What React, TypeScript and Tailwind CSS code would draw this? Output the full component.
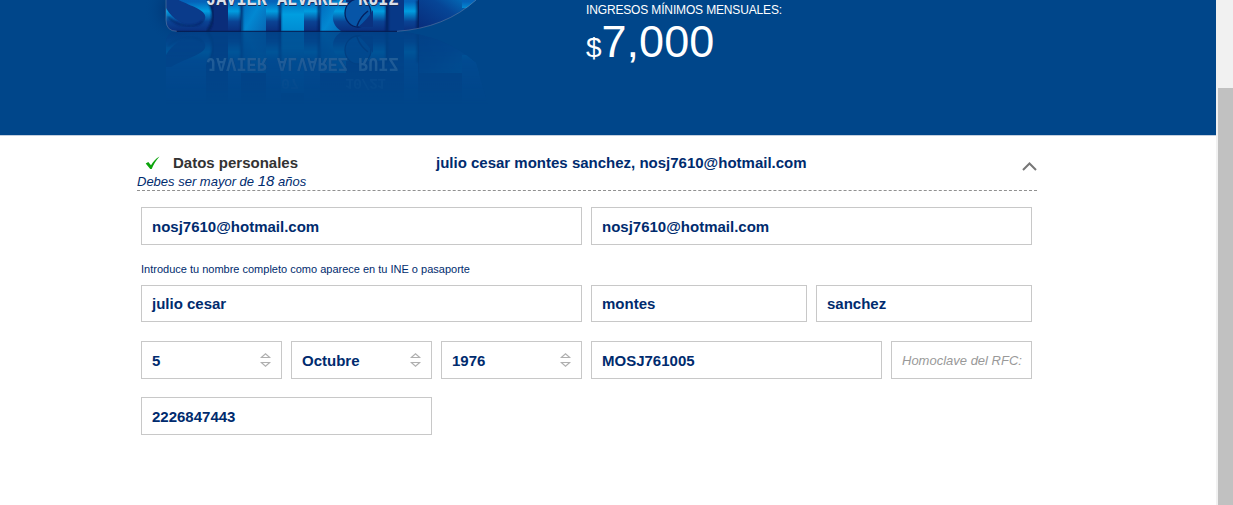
import React from "react";

function Field({ className = "", children }: { className?: string; children: React.ReactNode }) {
  return (
    <div
      className={`flex items-center justify-between whitespace-nowrap border border-[#c8c8c8] bg-white pl-[10px] text-[15px] font-bold leading-none text-[#002b6e] ${className}`}
    >
      {children}
    </div>
  );
}

function SelectField({ children }: { children: React.ReactNode }) {
  return (
    <Field className="h-[38px] w-[141px] pr-[10px]">
      <span>{children}</span>
      <svg width="11" height="14" viewBox="0 0 11 14" fill="none" stroke="#b0b0b0" strokeWidth="1.2">
        <path d="M1.3 4.5 L5.5 0.9 L9.7 4.5 M0.5 4.5 H10.5 M1.3 9.5 L5.5 13.1 L9.7 9.5 M0.5 9.5 H10.5" />
      </svg>
    </Field>
  );
}

function CardArt() {
  return (
    <svg className="block h-[135px] w-[560px]" viewBox="0 0 560 135">
      <defs>
        <linearGradient id="band" gradientUnits="userSpaceOnUse" x1="0" y1="-20" x2="0" y2="32">
          <stop offset="0" stopColor="#0757ad" />
          <stop offset="0.42" stopColor="#0563b9" />
          <stop offset="0.6" stopColor="#009ee0" />
          <stop offset="0.8" stopColor="#0a4394" />
          <stop offset="1" stopColor="#0a2d7c" />
        </linearGradient>
        <linearGradient id="bright" x1="0" y1="0" x2="1" y2="1">
          <stop offset="0" stopColor="#005fb4" />
          <stop offset="0.55" stopColor="#0288d2" />
          <stop offset="1" stopColor="#0867b4" />
        </linearGradient>
        <linearGradient id="cyan" gradientUnits="userSpaceOnUse" x1="0" y1="0" x2="0" y2="32">
          <stop offset="0" stopColor="#006fc0" />
          <stop offset="0.45" stopColor="#009ee0" />
          <stop offset="1" stopColor="#008bd2" />
        </linearGradient>
        <linearGradient id="tail" x1="0" y1="1" x2="1" y2="0">
          <stop offset="0" stopColor="#082a79" />
          <stop offset="0.5" stopColor="#064596" />
          <stop offset="1" stopColor="#008dd4" />
        </linearGradient>
        <radialGradient id="halo">
          <stop offset="0" stopColor="#001f58" stopOpacity="0.65" />
          <stop offset="1" stopColor="#00458a" stopOpacity="0" />
        </radialGradient>
        <linearGradient id="fade" gradientUnits="userSpaceOnUse" x1="0" y1="32" x2="0" y2="105">
          <stop offset="0" stopColor="#fff" stopOpacity="0.22" />
          <stop offset="0.5" stopColor="#fff" stopOpacity="0.13" />
          <stop offset="1" stopColor="#fff" stopOpacity="0" />
        </linearGradient>
        <mask id="fadeMask" maskUnits="userSpaceOnUse" x="0" y="32" width="560" height="103">
          <rect x="0" y="32" width="560" height="103" fill="url(#fade)" />
        </mask>
        <filter id="soft" x="-10%" y="-10%" width="120%" height="120%">
          <feGaussianBlur stdDeviation="0.8" />
        </filter>
        <clipPath id="cardShape">
          <path d="M166 -50 V20 Q166 31.5 178 31.5 H397 Q445 28 476 0 L490 -50 Z" />
        </clipPath>
        <g id="card">
          <g clipPath="url(#cardShape)">
            <rect x="160" y="-50" width="330" height="82" fill="#0a2d7a" />
            <path d="M160 -50 H206 V-2 C214 8 215 24 206 33 H160 Z" fill="url(#band)" />
            <path d="M166 8 C177 28 202 29 205 19 C208 9 188 6 171 -4 L166 -4 Z" fill="#0a3b8b" />
            <path d="M168 17 C179 28 196 28 203 21" fill="none" stroke="#07245f" strokeWidth="1.2" filter="url(#soft)" />
            <path d="M207 -2 C215 10 214 23 207 32" fill="none" stroke="#041d55" strokeWidth="2" filter="url(#soft)" />
            <rect x="228" y="-50" width="13" height="82" fill="url(#band)" />
            <rect x="241" y="-10" width="25" height="42" fill="url(#bright)" />
            <rect x="266" y="-50" width="15" height="82" fill="url(#band)" />
            <rect x="281" y="-30" width="23" height="62" fill="url(#cyan)" />
            <rect x="304" y="-50" width="16" height="82" fill="url(#band)" />
            <rect x="320" y="-10" width="26" height="42" fill="url(#bright)" />
            <path d="M241.5 0 V32 M280 0 V32 M319 0 V32" stroke="#041f5e" strokeWidth="2" filter="url(#soft)" />
            <path d="M343 2 H386 V32 H343 C330 26 329 10 343 2 Z" fill="url(#band)" />
            <ellipse cx="358" cy="13" rx="13" ry="14" fill="#0755a7" stroke="#04205f" strokeWidth="1.3" />
            <path d="M358 27 Q367 20 373 10 V27 Z" fill="#0a3280" />
            <path d="M357 26 Q360 17 368 11" fill="none" stroke="#04205f" strokeWidth="1.5" />
            <rect x="386" y="-10" width="18" height="42" fill="#073887" />
            <rect x="404" y="-50" width="14" height="82" fill="url(#band)" />
            <path d="M387 0 V32 M418 0 V32" stroke="#041d57" strokeWidth="2.4" filter="url(#soft)" />
            <rect x="419" y="-10" width="60" height="42" fill="url(#tail)" />
            <path d="M462 8 V-50 H490 V8 Z" fill="url(#band)" />
          </g>
          <g fontFamily="Liberation Mono, monospace" fontWeight="700" fontSize="21">
            <text transform="translate(206.5 5.5) scale(.805 1)" fill="#172c58">JAVIER ALVAREZ RUIZ</text>
            <text transform="translate(206 4.7) scale(.805 1)" fill="#d9dfe8">JAVIER ALVAREZ RUIZ</text>
          </g>
        </g>
      </defs>
      <ellipse cx="176" cy="10" rx="32" ry="34" fill="url(#halo)" />
      <g mask="url(#fadeMask)">
        <use href="#card" transform="translate(0 63) scale(1 -1)" />
        <g
          fill="#86aed8"
          opacity="0.5"
          fontFamily="Liberation Mono, monospace"
          fontWeight="700"
          fontSize="15"
          transform="translate(0 79) scale(1 -1)"
        >
          <text x="281">07</text>
          <text x="345" textLength="41">10/21</text>
        </g>
      </g>
      <use href="#card" />
      <path d="M176 31.3 H397" stroke="#061b4d" />
      <path d="M166 0 V20 Q166 31.3 177 31.3 M397 31.3 Q445 28 476 0" fill="none" stroke="#7993ad" strokeWidth=".7" opacity=".65" />
    </svg>
  );
}

export default function App() {
  return (
    <div className="flex h-[505px] w-full overflow-hidden bg-white font-['Liberation_Sans',Arial,sans-serif]">
      <main className="w-[1216px] shrink-0">
        <header className="flex h-[136px] border-b border-[#c3cfdf] bg-[#00468a]">
          <CardArt />
          <div className="pl-[26px] pt-[3px] text-white">
            <p className="whitespace-nowrap text-[12px] leading-[14px] tracking-[-0.15px]">INGRESOS MÍNIMOS MENSUALES:</p>
            <p className="mt-[1px] whitespace-nowrap text-[45px] leading-[48px]">
              <span className="text-[28px]">$</span>7,000
            </p>
          </div>
        </header>

        <section className="ml-[137px] w-[900px]">
          <div className="flex h-[55px] border-b border-dashed border-[#909090]">
            <div className="w-[299px] pt-[18px]">
              <h2 className="flex h-[18px] items-center text-[15px] font-bold leading-[18px] text-[#333]">
                <svg className="ml-[8px] mr-[13px]" width="15" height="14" viewBox="0 0 15 14">
                  <path d="M0.7 7.4 L3.3 6 L6 9.2 C8 5.6 10.5 2.7 14.5 0.4 C11 4.3 8.5 8.2 6.7 13 H5.2 Z" fill="#0ca40c" />
                </svg>
                Datos personales
              </h2>
              <p className="whitespace-nowrap text-[13px] italic leading-[18px] text-[#002b6e]">
                Debes ser mayor de <span className="text-[15px]">18</span> años
              </p>
            </div>
            <p className="flex-1 pt-[18px] text-[15px] font-bold leading-[18px] text-[#002b6e]">
              julio cesar montes sanchez, nosj7610@hotmail.com
            </p>
            <svg className="mt-[26px]" width="15" height="9" viewBox="0 0 15 9" fill="none" stroke="#777" strokeWidth="2">
              <path d="M1 8 L7.5 1.5 L14 8" />
            </svg>
          </div>

          <form className="ml-[4px] w-[891px] pt-[16px]">
            <div className="flex gap-[9px]">
              <Field className="h-[38px] w-[441px]">nosj7610@hotmail.com</Field>
              <Field className="h-[38px] w-[441px]">nosj7610@hotmail.com</Field>
            </div>
            <p className="mt-[17px] h-[23px] text-[11px] leading-[14px] text-[#002b6e]">
              Introduce tu nombre completo como aparece en tu INE o pasaporte
            </p>
            <div className="flex gap-[9px]">
              <Field className="h-[37px] w-[441px]">julio cesar</Field>
              <Field className="h-[37px] w-[216px]">montes</Field>
              <Field className="h-[37px] w-[216px]">sanchez</Field>
            </div>
            <div className="mt-[19px] flex gap-[9px]">
              <SelectField>5</SelectField>
              <SelectField>Octubre</SelectField>
              <SelectField>1976</SelectField>
              <Field className="h-[38px] w-[291px]">MOSJ761005</Field>
              <Field className="h-[38px] w-[141px]">
                <span className="text-[13px] font-normal italic text-[#999]">Homoclave del RFC:</span>
              </Field>
            </div>
            <Field className="mt-[18px] h-[38px] w-[291px]">2226847443</Field>
          </form>
        </section>
      </main>
      <aside className="flex-1 bg-[#f1f1f1] pl-[2px] pt-[88px]">
        <div className="h-[417px] w-[15px] bg-[#c1c1c1]" />
      </aside>
    </div>
  );
}
